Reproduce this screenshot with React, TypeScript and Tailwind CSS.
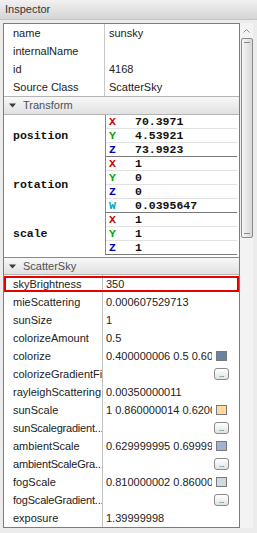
import React from 'react';

type Axis = 'X' | 'Y' | 'Z' | 'W';

const axisColor: Record<Axis, string> = {
  X: 'text-[#c80000]',
  Y: 'text-[#00a000]',
  Z: 'text-[#0000b4]',
  W: 'text-[#00aabb]',
};

const transformGroups: { label: string; rows: [Axis, string][] }[] = [
  { label: 'position', rows: [['X', '70.3971'], ['Y', '4.53921'], ['Z', '73.9923']] },
  { label: 'rotation', rows: [['X', '1'], ['Y', '0'], ['Z', '0'], ['W', '0.0395647']] },
  { label: 'scale', rows: [['X', '1'], ['Y', '1'], ['Z', '1']] },
];

type SkyRow = { label: string; value?: string; swatch?: string; button?: boolean; highlight?: boolean };

const skyRows: SkyRow[] = [
  { label: 'skyBrightness', value: '350', highlight: true },
  { label: 'mieScattering', value: '0.000607529713' },
  { label: 'sunSize', value: '1' },
  { label: 'colorizeAmount', value: '0.5' },
  { label: 'colorize', value: '0.400000006 0.5 0.600000024', swatch: '#6c84a4' },
  { label: 'colorizeGradientFile', button: true },
  { label: 'rayleighScattering', value: '0.00350000011' },
  { label: 'sunScale', value: '1 0.860000014 0.620000005', swatch: '#ffdba0' },
  { label: 'sunScalegradient...', button: true },
  { label: 'ambientScale', value: '0.629999995 0.699999988 0.819999993', swatch: '#a0b2d0' },
  { label: 'ambientScaleGra...', button: true },
  { label: 'fogScale', value: '0.810000002 0.860000014 0.879999995', swatch: '#cfd9e1' },
  { label: 'fogScaleGradient...', button: true },
  { label: 'exposure', value: '1.39999998' },
];

const SectionHeader: React.FC<{ title: string; className?: string }> = ({ title, className }) => (
  <div className={`flex items-center bg-gradient-to-b from-[#f8f8f8] to-[#e1e1e1] border-y border-[#b4b4b4] text-[#505050] ${className}`}>
    <svg width="7" height="5" viewBox="0 0 7 5" className="ml-[5px]">
      <path d="M0 0.5 L7 0.5 L3.5 4.5 Z" fill="#3a3a3a" />
    </svg>
    <span className="ml-[7px]">{title}</span>
  </div>
);

const DotsButton = () => (
  <div className="ml-[2px] w-[15px] h-[12px] rounded-[3px] border border-[#8a8a8a] bg-gradient-to-b from-white to-[#e2e2e2] flex items-end justify-center">
    <span className="text-[8px] leading-[8px] text-[#333] tracking-[-0.5px]">...</span>
  </div>
);

export default function App() {
  return (
    <div className="w-[257px] h-[533px] bg-[#ececec] text-[11px] text-[#222] overflow-hidden" style={{ fontFamily: '"Liberation Sans", Arial, sans-serif' }}>
      {/* title bar */}
      <div className="h-[20px] bg-gradient-to-b from-[#f1f1f1] to-[#d5d5d5] border-b border-[#c4c4c4] flex items-center pl-[5px] text-[#333]">
        Inspector
      </div>

      <div className="mt-[3px] flex">
        {/* panel */}
        <div className="ml-[3px] w-[237px] border border-[#7c7c7c] bg-white">
          {[
            ['name', 'sunsky'],
            ['internalName', ''],
            ['id', '4168'],
            ['Source Class', 'ScatterSky'],
          ].map(([k, v]) => (
            <div key={k} className="flex h-[18px]">
              <div className="w-[101px] pl-[9px] flex items-center border-r border-[#c8c8c8]">{k}</div>
              <div className="flex-1 pl-[4px] flex items-center">{v}</div>
            </div>
          ))}

          <SectionHeader title="Transform" className="h-[19px]" />

          <div style={{ fontFamily: '"Liberation Mono", "Courier New", monospace' }} className="text-[11.5px] font-bold text-[#111]">
            {transformGroups.map((g) => (
              <div key={g.label} className="flex">
                <div className="w-[101px] pl-[9px] flex items-center">{g.label}</div>
                <div className="flex-1 mr-[2px] border-l border-[#8a8a8a]">
                  {g.rows.map(([a, v], i) => (
                    <div
                      key={a}
                      className={`h-[14px] flex items-center border-b ${i === g.rows.length - 1 ? 'border-[#7a7a7a]' : 'border-[#e2e2e2]'}`}
                    >
                      <span className={`w-[29px] pl-[3px] ${axisColor[a]}`}>{a}</span>
                      <span>{v}</span>
                    </div>
                  ))}
                </div>
              </div>
            ))}
            <div className="h-[3px] border-b border-[#8a8a8a]" />
          </div>

          <SectionHeader title="ScatterSky" className="h-[17px] border-t-0" />

          {skyRows.map((r) => (
            <div key={r.label} className="relative flex h-[18px]">
              <div
                className={`w-[99px] pl-[9px] flex items-center border-r border-[#c0c0c0] overflow-hidden whitespace-nowrap ${r.label.endsWith('...') ? 'tracking-[-0.2px]' : ''}`}
              >
                {r.label}
              </div>
              <div className="flex-1 pl-[3px] flex items-center">
                <div className="w-[106px] overflow-hidden whitespace-nowrap">{r.value}</div>
                {r.swatch && (
                  <div className="ml-[4px] w-[11px] h-[10px] border border-[#7a7a7a]" style={{ backgroundColor: r.swatch }} />
                )}
                {r.button && <DotsButton />}
              </div>
              {r.highlight && (
                <div className="absolute left-0 right-0 top-[1px] bottom-[1px] border-2 border-[#e60000]" />
              )}
            </div>
          ))}
        </div>

        {/* scrollbar */}
        <div className="w-[13px] h-[505px] bg-[#f3f3f3] flex flex-col items-center">
          <div className="h-[15px] w-full flex items-center justify-center">
            <svg width="7" height="4" viewBox="0 0 7 4">
              <path d="M0.5 3.5 L3.5 0.5 L6.5 3.5" fill="none" stroke="#8c8c8c" strokeWidth="1" />
            </svg>
          </div>
          <div className="w-[12px] h-[200px] rounded-[2px] border border-[#8a8a8a] bg-gradient-to-r from-[#f6f6f6] to-[#d8d8d8] flex flex-col items-center justify-between py-[3px]">
            <div className="w-[6px] h-[1px] bg-[#8a8a8a]" />
            <div className="w-[6px] h-[1px] bg-[#8a8a8a]" />
          </div>
        </div>
      </div>
    </div>
  );
}
